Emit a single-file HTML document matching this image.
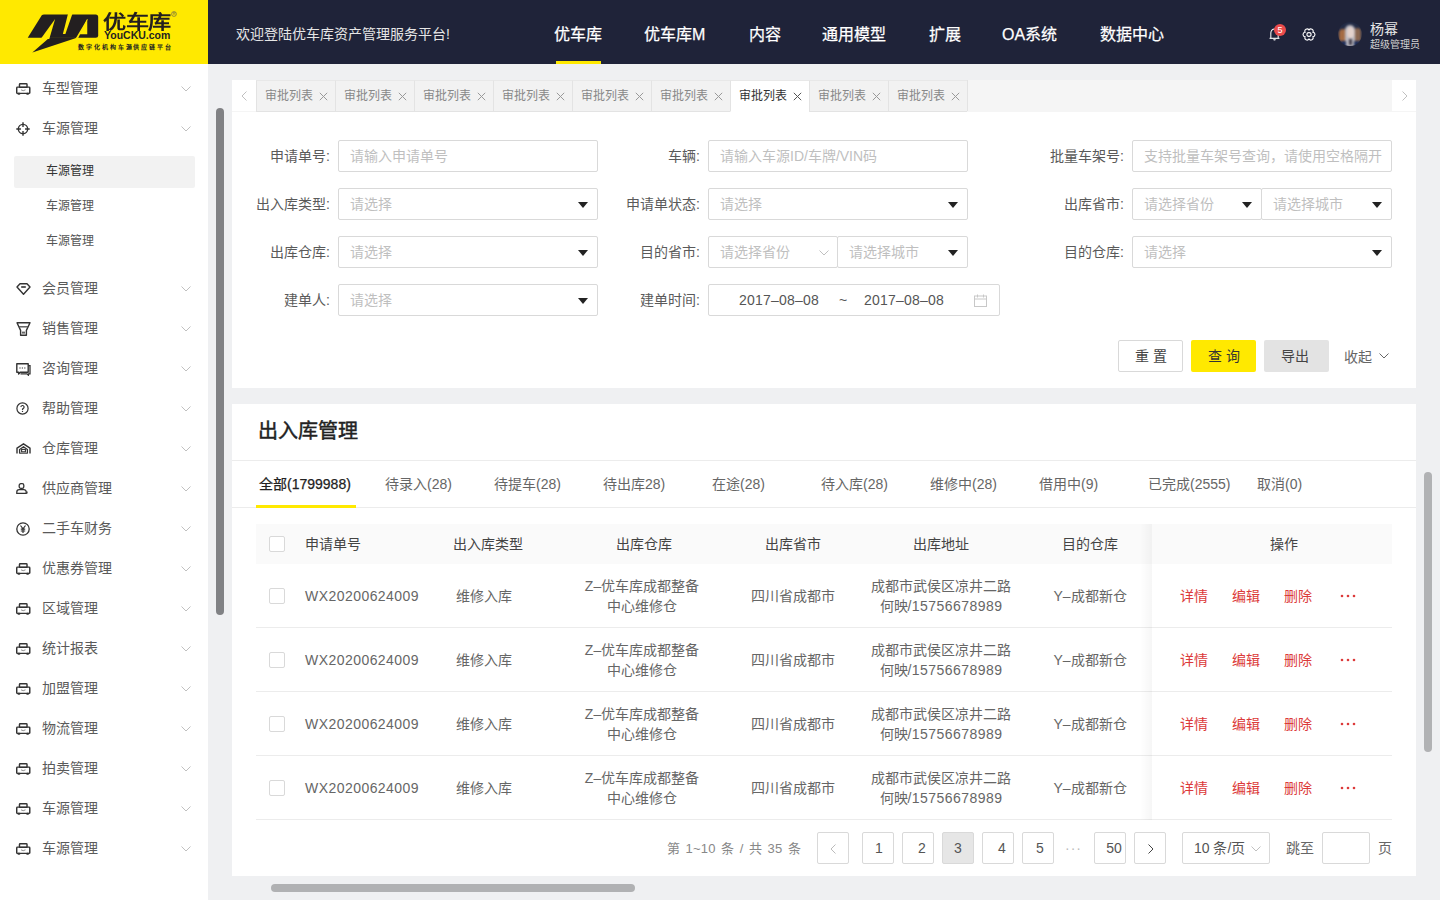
<!DOCTYPE html>
<html lang="zh-CN"><head><meta charset="utf-8">
<style>
*{margin:0;padding:0;box-sizing:border-box}
html,body{width:1440px;height:900px;overflow:hidden}
body{font-family:"Liberation Sans",sans-serif;background:#eff0f2;position:relative;color:#333}
.abs{position:absolute}
.t{position:absolute;white-space:nowrap;line-height:1}
/* header */
#hdr{position:absolute;left:0;top:0;width:1440px;height:64px;background:#1f2339}
#logo{position:absolute;left:0;top:0;width:208px;height:64px;background:#ffe900}
.nav{position:absolute;top:25px;font-size:16px;color:#fff;line-height:20px;white-space:nowrap;-webkit-text-stroke:0.25px #fff}
/* sidebar */
#side{position:absolute;left:0;top:64px;width:208px;height:836px;background:#fff}
.mi{position:absolute;left:42px;font-size:14px;color:#5a5a5a;line-height:20px;white-space:nowrap}
.chev{position:absolute;left:182px;width:10px;height:6px}
.ico{position:absolute;left:16px;width:16px;height:16px}
.sub{position:absolute;left:46px;font-size:12px;color:#555;line-height:16px;white-space:nowrap}
/* cards */
.card{position:absolute;background:#fff}
.lbl{position:absolute;font-size:14px;color:#5a5a5a;line-height:20px;white-space:nowrap;text-align:right}
.inp{position:absolute;height:32px;border:1px solid #d9d9d9;border-radius:2px;background:#fff}
.ph{position:absolute;left:11px;top:5px;font-size:14px;line-height:20px;color:#bfbfbf;white-space:nowrap}
.tri{position:absolute;top:13px;width:0;height:0;border-left:5px solid transparent;border-right:5px solid transparent;border-top:6px solid #222}
.tab{position:absolute;top:80px;height:32px;width:79px;background:#f2f2f2;border-left:1px solid #e3e3e3;border-bottom:1px solid #e3e3e3;border-top:1px solid #e8e8e8}
.tab span{position:absolute;left:8px;top:8px;font-size:12px;line-height:14px;color:#888}
.tab i{position:absolute;left:63px;top:11px;width:9px;height:9px}
.th{position:absolute;top:536px;font-size:14px;color:#444;line-height:16px;white-space:nowrap}
.td{position:absolute;font-size:14px;color:#666;line-height:20px;white-space:nowrap;text-align:center}
.cb{position:absolute;left:269px;width:16px;height:16px;border:1px solid #d9d9d9;border-radius:2px;background:#fff}
.op{position:absolute;font-size:14px;color:#dc3a3a;line-height:20px;white-space:nowrap}
.pg{position:absolute;top:832px;width:32px;height:32px;border:1px solid #d9d9d9;border-radius:2px;font-size:14px;color:#555;text-align:center;line-height:30px;background:#fff}
.st{position:absolute;top:475px;font-size:14px;color:#666;line-height:18px;white-space:nowrap}
</style></head>
<body>
<div id="hdr">
  <div id="logo">
<svg class="abs" style="left:24px;top:10px" width="80" height="46" viewBox="0 0 1440 828">
<path d="M70 495 L320 95 Q335 80 360 80 L1290 80 Q1335 80 1335 125 L1335 455 Q1335 500 1290 500 L70 500 Z" fill="#231f20"/>
<path d="M447 490 L940 490 L925 508 L150 765 L440 512 Z" fill="#231f20"/>
<path d="M300 520 L560 160 L455 520 Z" fill="#ffe900"/>
<path d="M795 60 L875 60 L745 430 L700 430 Z" fill="#ffe900"/>
<path d="M1000 435 L1138 160 L1138 435 Z" fill="#ffe900"/>
<path d="M1138 160 L1145 175 L975 505 L935 505 Z" fill="#ffe900"/>
</svg>
<div class="t" style="left:103px;top:13px;font-size:19px;font-weight:900;color:#231f20;transform:scaleX(1.22);transform-origin:0 0;letter-spacing:-0.5px;line-height:19px">优车库</div>
<div class="t" style="left:104px;top:31px;font-size:10.5px;font-weight:bold;color:#231f20;line-height:9px">YouCKU.com</div>
<div class="t" style="left:78px;top:44px;font-size:6px;font-weight:bold;color:#231f20;letter-spacing:1.92px;line-height:7px">数字化机构车源供应链平台</div>
<svg class="abs" style="left:171px;top:11px" width="6" height="6" viewBox="0 0 6 6"><circle cx="3" cy="3" r="2.4" fill="none" stroke="#555" stroke-width="0.6"/><text x="3" y="4.3" font-size="3.5" text-anchor="middle" fill="#555" font-family="Liberation Sans">R</text></svg>
</div>
  <div class="t" style="left:236px;top:26px;font-size:14px;color:#e6e6e6;line-height:16px">欢迎登陆优车库资产管理服务平台!</div>
  <div class="nav" style="left:554px">优车库</div>
  <div class="abs" style="left:556px;top:61px;width:45px;height:3px;background:#ffe900"></div>
  <div class="nav" style="left:644px">优车库M</div>
  <div class="nav" style="left:749px">内容</div>
  <div class="nav" style="left:822px">通用模型</div>
  <div class="nav" style="left:929px">扩展</div>
  <div class="nav" style="left:1002px">OA系统</div>
  <div class="nav" style="left:1100px">数据中心</div>

  <svg class="abs" style="left:1268.5px;top:27px" width="11" height="14" viewBox="0 0 12 15"><path d="M2 12V6.3A4 4.3 0 0 1 10 6.3V12" fill="none" stroke="#fff" stroke-width="1.1"/><path d="M0.6 12.2h10.8" stroke="#fff" stroke-width="1.2"/><path d="M4.6 13.2a1.4 1.4 0 0 0 2.8 0z" fill="#fff"/></svg>
  <div class="abs" style="left:1274px;top:24px;width:12px;height:12px;border-radius:6px;background:#ea4b4b;color:#fff;font-size:9px;line-height:12px;text-align:center">5</div>
  <svg class="abs" style="left:1301.5px;top:27.5px" width="14" height="13" viewBox="0 0 14 13"><path d="M10.92 4.24A2.27 2.27 0 0 1 10.92 8.76A2.27 2.27 0 0 1 7.00 11.02A2.27 2.27 0 0 1 3.08 8.76A2.27 2.27 0 0 1 3.08 4.24A2.27 2.27 0 0 1 7.00 1.98A2.27 2.27 0 0 1 10.92 4.24Z" fill="none" stroke="#fff" stroke-width="1.1"/><ellipse cx="7" cy="6.5" rx="2.1" ry="1.9" fill="none" stroke="#fff" stroke-width="1.1"/></svg>
  <div class="abs" style="left:1338px;top:22px;width:24px;height:24px;border-radius:12px;overflow:hidden;background:#222a44">
    <div class="abs" style="left:0px;top:0px;width:24px;height:24px;filter:blur(0.9px)">
    <div class="abs" style="left:1px;top:7px;width:8px;height:13px;border-radius:4px;background:#a66c44"></div>
    <div class="abs" style="left:16px;top:6px;width:7px;height:14px;border-radius:4px;background:#8a6650"></div>
    <div class="abs" style="left:7px;top:3px;width:10px;height:23px;border-radius:5px 5px 2px 2px;background:#bdbbc2"></div>
    <div class="abs" style="left:9px;top:5px;width:7px;height:11px;border-radius:3.5px;background:#e4d2cc"></div>
    <div class="abs" style="left:11px;top:17px;width:3px;height:6px;background:#3f3a48"></div>
    <div class="abs" style="left:3px;top:19px;width:5px;height:6px;background:#1d2c58"></div>
    <div class="abs" style="left:16px;top:19px;width:6px;height:6px;background:#1d2c58"></div>
    </div>
  </div>
  <div class="t" style="left:1370px;top:21px;font-size:14px;color:#e6e6e6;line-height:16px">杨幂</div>
  <div class="t" style="left:1370px;top:39px;font-size:10px;color:#d0d0d0;line-height:11px">超级管理员</div>
</div>

<div id="side">
<svg class="ico" style="top:18.5px;height:12px;width:14.5px" viewBox="0 0 15 13" preserveAspectRatio="none"><rect x="3.6" y="0.75" width="7.8" height="4" rx="0.8" fill="none" stroke="#333" stroke-width="1.5"/><rect x="0.75" y="4.5" width="13.5" height="6.8" rx="0.8" fill="none" stroke="#333" stroke-width="1.5"/><rect x="1.5" y="10.5" width="3" height="2.2" rx="1" fill="#333"/><rect x="10.5" y="10.5" width="3" height="2.2" rx="1" fill="#333"/><path d="M5.2 7.4 Q7.5 9.2 9.8 7.4" fill="none" stroke="#777" stroke-width="0.9"/></svg>
<div class="mi" style="top:14px">车型管理</div>
<svg class="chev" style="top:22px;left:181px" viewBox="0 0 10 6"><path d="M0.5 0.5L5 5 9.5 0.5" fill="none" stroke="#c0c0c0" stroke-width="1"/></svg>
<svg class="ico" style="top:58.0px;width:14px;height:14px" viewBox="0 0 15 15"><circle cx="7.5" cy="7.5" r="5" fill="none" stroke="#333" stroke-width="1.5"/><path d="M7.5 0.3v5M7.5 9.7v5M0.3 7.5h5M9.7 7.5h5" stroke="#333" stroke-width="1.5"/></svg>
<div class="mi" style="top:54px">车源管理</div>
<svg class="chev" style="top:62px;left:181px" viewBox="0 0 10 6"><path d="M0.5 0.5L5 5 9.5 0.5" fill="none" stroke="#c0c0c0" stroke-width="1"/></svg>
<svg class="ico" style="top:219px;width:15px;height:12px" viewBox="0 0 15 12"><path d="M4 0.8h7l3 3.2-6.5 7.2L1 4z" fill="none" stroke="#333" stroke-width="1.4" stroke-linejoin="round"/><path d="M5.2 4h4.6" stroke="#333" stroke-width="1.6"/></svg>
<div class="mi" style="top:214px">会员管理</div>
<svg class="chev" style="top:222px;left:181px" viewBox="0 0 10 6"><path d="M0.5 0.5L5 5 9.5 0.5" fill="none" stroke="#c0c0c0" stroke-width="1"/></svg>
<svg class="ico" style="top:258px;width:15px;height:14px" viewBox="0 0 15 14"><path d="M1 0.8h13l-3.6 7.6v4.8H4.6V8.4z" fill="none" stroke="#333" stroke-width="1.4" stroke-linejoin="round"/><path d="M3 4.8h9" stroke="#555" stroke-width="1.4"/><rect x="6" y="9.6" width="3" height="2" fill="#666"/></svg>
<div class="mi" style="top:254px">销售管理</div>
<svg class="chev" style="top:262px;left:181px" viewBox="0 0 10 6"><path d="M0.5 0.5L5 5 9.5 0.5" fill="none" stroke="#c0c0c0" stroke-width="1"/></svg>
<svg class="ico" style="top:299px;width:15px;height:13px" viewBox="0 0 15 13"><path d="M0.8 0.8h11.4v8.4H4.2l-1.6 1.8V9.2H0.8z" fill="none" stroke="#333" stroke-width="1.4" stroke-linejoin="round"/><path d="M12.2 2.6h1.8v8.2h-1.4l-0.2 1.4-1.4-1.4H4.5" fill="none" stroke="#333" stroke-width="1.3"/><path d="M3.4 5h1.2M5.8 5h1.2M8.2 5h1.2" stroke="#333" stroke-width="1.2"/></svg>
<div class="mi" style="top:294px">咨询管理</div>
<svg class="chev" style="top:302px;left:181px" viewBox="0 0 10 6"><path d="M0.5 0.5L5 5 9.5 0.5" fill="none" stroke="#c0c0c0" stroke-width="1"/></svg>
<svg class="ico" style="top:338px;width:13px;height:13px" viewBox="0 0 13 13"><circle cx="6.5" cy="6.5" r="5.6" fill="none" stroke="#333" stroke-width="1.2"/><path d="M4.9 5.1a1.6 1.6 0 1 1 2.2 1.5c-0.5 0.2-0.6 0.5-0.6 1v0.4" fill="none" stroke="#333" stroke-width="1.2"/><circle cx="6.5" cy="9.4" r="0.7" fill="#333"/></svg>
<div class="mi" style="top:334px">帮助管理</div>
<svg class="chev" style="top:342px;left:181px" viewBox="0 0 10 6"><path d="M0.5 0.5L5 5 9.5 0.5" fill="none" stroke="#c0c0c0" stroke-width="1"/></svg>
<svg class="ico" style="top:379px;width:15px;height:11px" viewBox="0 0 15 11"><path d="M1 10.5V5.2L7.5 0.9 14 5.2v5.3" fill="none" stroke="#333" stroke-width="1.4"/><path d="M3.6 10.5V6.5L7.5 3.8l3.9 2.7v4" fill="none" stroke="#333" stroke-width="1.3"/><rect x="5.6" y="6.4" width="3.8" height="2.4" fill="none" stroke="#333" stroke-width="1.1"/><path d="M3.6 10.2h7.8" stroke="#333" stroke-width="1"/></svg>
<div class="mi" style="top:374px">仓库管理</div>
<svg class="chev" style="top:382px;left:181px" viewBox="0 0 10 6"><path d="M0.5 0.5L5 5 9.5 0.5" fill="none" stroke="#c0c0c0" stroke-width="1"/></svg>
<svg class="ico" style="top:419px;width:12px;height:11px" viewBox="0 0 12 11"><rect x="3.2" y="0.7" width="4.6" height="4.6" rx="1.6" fill="none" stroke="#333" stroke-width="1.3"/><path d="M0.8 10.3V9a2.4 2.4 0 0 1 2.4-2.4h4.6A2.4 2.4 0 0 1 10.2 9v1.3z" fill="none" stroke="#333" stroke-width="1.3"/><path d="M11 8.5v2" stroke="#333" stroke-width="1.2"/></svg>
<div class="mi" style="top:414px">供应商管理</div>
<svg class="chev" style="top:422px;left:181px" viewBox="0 0 10 6"><path d="M0.5 0.5L5 5 9.5 0.5" fill="none" stroke="#c0c0c0" stroke-width="1"/></svg>
<svg class="ico" style="top:458px;width:14px;height:14px" viewBox="0 0 14 14"><circle cx="7" cy="7" r="6.2" fill="none" stroke="#333" stroke-width="1.3"/><path d="M4.5 3.5L7 6.8 9.5 3.5M7 6.8v4.2M4.8 7.2h4.4M4.8 9h4.4" fill="none" stroke="#333" stroke-width="1.2"/></svg>
<div class="mi" style="top:454px">二手车财务</div>
<svg class="chev" style="top:462px;left:181px" viewBox="0 0 10 6"><path d="M0.5 0.5L5 5 9.5 0.5" fill="none" stroke="#c0c0c0" stroke-width="1"/></svg>
<svg class="ico" style="top:498.5px;height:12px;width:14.5px" viewBox="0 0 15 13" preserveAspectRatio="none"><rect x="3.6" y="0.75" width="7.8" height="4" rx="0.8" fill="none" stroke="#333" stroke-width="1.5"/><rect x="0.75" y="4.5" width="13.5" height="6.8" rx="0.8" fill="none" stroke="#333" stroke-width="1.5"/><rect x="1.5" y="10.5" width="3" height="2.2" rx="1" fill="#333"/><rect x="10.5" y="10.5" width="3" height="2.2" rx="1" fill="#333"/><path d="M5.2 7.4 Q7.5 9.2 9.8 7.4" fill="none" stroke="#777" stroke-width="0.9"/></svg>
<div class="mi" style="top:494px">优惠券管理</div>
<svg class="chev" style="top:502px;left:181px" viewBox="0 0 10 6"><path d="M0.5 0.5L5 5 9.5 0.5" fill="none" stroke="#c0c0c0" stroke-width="1"/></svg>
<svg class="ico" style="top:538.5px;height:12px;width:14.5px" viewBox="0 0 15 13" preserveAspectRatio="none"><rect x="3.6" y="0.75" width="7.8" height="4" rx="0.8" fill="none" stroke="#333" stroke-width="1.5"/><rect x="0.75" y="4.5" width="13.5" height="6.8" rx="0.8" fill="none" stroke="#333" stroke-width="1.5"/><rect x="1.5" y="10.5" width="3" height="2.2" rx="1" fill="#333"/><rect x="10.5" y="10.5" width="3" height="2.2" rx="1" fill="#333"/><path d="M5.2 7.4 Q7.5 9.2 9.8 7.4" fill="none" stroke="#777" stroke-width="0.9"/></svg>
<div class="mi" style="top:534px">区域管理</div>
<svg class="chev" style="top:542px;left:181px" viewBox="0 0 10 6"><path d="M0.5 0.5L5 5 9.5 0.5" fill="none" stroke="#c0c0c0" stroke-width="1"/></svg>
<svg class="ico" style="top:578.5px;height:12px;width:14.5px" viewBox="0 0 15 13" preserveAspectRatio="none"><rect x="3.6" y="0.75" width="7.8" height="4" rx="0.8" fill="none" stroke="#333" stroke-width="1.5"/><rect x="0.75" y="4.5" width="13.5" height="6.8" rx="0.8" fill="none" stroke="#333" stroke-width="1.5"/><rect x="1.5" y="10.5" width="3" height="2.2" rx="1" fill="#333"/><rect x="10.5" y="10.5" width="3" height="2.2" rx="1" fill="#333"/><path d="M5.2 7.4 Q7.5 9.2 9.8 7.4" fill="none" stroke="#777" stroke-width="0.9"/></svg>
<div class="mi" style="top:574px">统计报表</div>
<svg class="chev" style="top:582px;left:181px" viewBox="0 0 10 6"><path d="M0.5 0.5L5 5 9.5 0.5" fill="none" stroke="#c0c0c0" stroke-width="1"/></svg>
<svg class="ico" style="top:618.5px;height:12px;width:14.5px" viewBox="0 0 15 13" preserveAspectRatio="none"><rect x="3.6" y="0.75" width="7.8" height="4" rx="0.8" fill="none" stroke="#333" stroke-width="1.5"/><rect x="0.75" y="4.5" width="13.5" height="6.8" rx="0.8" fill="none" stroke="#333" stroke-width="1.5"/><rect x="1.5" y="10.5" width="3" height="2.2" rx="1" fill="#333"/><rect x="10.5" y="10.5" width="3" height="2.2" rx="1" fill="#333"/><path d="M5.2 7.4 Q7.5 9.2 9.8 7.4" fill="none" stroke="#777" stroke-width="0.9"/></svg>
<div class="mi" style="top:614px">加盟管理</div>
<svg class="chev" style="top:622px;left:181px" viewBox="0 0 10 6"><path d="M0.5 0.5L5 5 9.5 0.5" fill="none" stroke="#c0c0c0" stroke-width="1"/></svg>
<svg class="ico" style="top:658.5px;height:12px;width:14.5px" viewBox="0 0 15 13" preserveAspectRatio="none"><rect x="3.6" y="0.75" width="7.8" height="4" rx="0.8" fill="none" stroke="#333" stroke-width="1.5"/><rect x="0.75" y="4.5" width="13.5" height="6.8" rx="0.8" fill="none" stroke="#333" stroke-width="1.5"/><rect x="1.5" y="10.5" width="3" height="2.2" rx="1" fill="#333"/><rect x="10.5" y="10.5" width="3" height="2.2" rx="1" fill="#333"/><path d="M5.2 7.4 Q7.5 9.2 9.8 7.4" fill="none" stroke="#777" stroke-width="0.9"/></svg>
<div class="mi" style="top:654px">物流管理</div>
<svg class="chev" style="top:662px;left:181px" viewBox="0 0 10 6"><path d="M0.5 0.5L5 5 9.5 0.5" fill="none" stroke="#c0c0c0" stroke-width="1"/></svg>
<svg class="ico" style="top:698.5px;height:12px;width:14.5px" viewBox="0 0 15 13" preserveAspectRatio="none"><rect x="3.6" y="0.75" width="7.8" height="4" rx="0.8" fill="none" stroke="#333" stroke-width="1.5"/><rect x="0.75" y="4.5" width="13.5" height="6.8" rx="0.8" fill="none" stroke="#333" stroke-width="1.5"/><rect x="1.5" y="10.5" width="3" height="2.2" rx="1" fill="#333"/><rect x="10.5" y="10.5" width="3" height="2.2" rx="1" fill="#333"/><path d="M5.2 7.4 Q7.5 9.2 9.8 7.4" fill="none" stroke="#777" stroke-width="0.9"/></svg>
<div class="mi" style="top:694px">拍卖管理</div>
<svg class="chev" style="top:702px;left:181px" viewBox="0 0 10 6"><path d="M0.5 0.5L5 5 9.5 0.5" fill="none" stroke="#c0c0c0" stroke-width="1"/></svg>
<svg class="ico" style="top:738.5px;height:12px;width:14.5px" viewBox="0 0 15 13" preserveAspectRatio="none"><rect x="3.6" y="0.75" width="7.8" height="4" rx="0.8" fill="none" stroke="#333" stroke-width="1.5"/><rect x="0.75" y="4.5" width="13.5" height="6.8" rx="0.8" fill="none" stroke="#333" stroke-width="1.5"/><rect x="1.5" y="10.5" width="3" height="2.2" rx="1" fill="#333"/><rect x="10.5" y="10.5" width="3" height="2.2" rx="1" fill="#333"/><path d="M5.2 7.4 Q7.5 9.2 9.8 7.4" fill="none" stroke="#777" stroke-width="0.9"/></svg>
<div class="mi" style="top:734px">车源管理</div>
<svg class="chev" style="top:742px;left:181px" viewBox="0 0 10 6"><path d="M0.5 0.5L5 5 9.5 0.5" fill="none" stroke="#c0c0c0" stroke-width="1"/></svg>
<svg class="ico" style="top:778.5px;height:12px;width:14.5px" viewBox="0 0 15 13" preserveAspectRatio="none"><rect x="3.6" y="0.75" width="7.8" height="4" rx="0.8" fill="none" stroke="#333" stroke-width="1.5"/><rect x="0.75" y="4.5" width="13.5" height="6.8" rx="0.8" fill="none" stroke="#333" stroke-width="1.5"/><rect x="1.5" y="10.5" width="3" height="2.2" rx="1" fill="#333"/><rect x="10.5" y="10.5" width="3" height="2.2" rx="1" fill="#333"/><path d="M5.2 7.4 Q7.5 9.2 9.8 7.4" fill="none" stroke="#777" stroke-width="0.9"/></svg>
<div class="mi" style="top:774px">车源管理</div>
<svg class="chev" style="top:782px;left:181px" viewBox="0 0 10 6"><path d="M0.5 0.5L5 5 9.5 0.5" fill="none" stroke="#c0c0c0" stroke-width="1"/></svg>
<div class="abs" style="left:14px;top:92px;width:181px;height:32px;background:#f2f2f2;border-radius:2px"></div>
<div class="sub" style="top:99px;color:#333">车源管理</div>
<div class="sub" style="top:134px;color:#555">车源管理</div>
<div class="sub" style="top:169px;color:#555">车源管理</div>
</div>
<div class="abs" style="left:216px;top:108px;width:8px;height:507px;background:#808184;border-radius:4px"></div>

<div class="card" style="left:232px;top:80px;width:1184px;height:32px;background:#f5f5f5"></div>
<div class="card" style="left:232px;top:80px;width:24px;height:31px;background:#fff"><svg class="abs" style="left:9px;top:11px" width="6" height="10" viewBox="0 0 6 10"><path d="M5.5 0.5L1 5l4.5 4.5" fill="none" stroke="#c0c0c0" stroke-width="1"/></svg></div>
<div class="card" style="left:1392px;top:80px;width:24px;height:31px;background:#fff"><svg class="abs" style="left:10px;top:11px" width="6" height="10" viewBox="0 0 6 10"><path d="M0.5 0.5L5 5 0.5 9.5" fill="none" stroke="#c0c0c0" stroke-width="1"/></svg></div>
<div class="tab" style="left:256px;background:#f2f2f2;"><span style="color:#888">审批列表</span><svg class="abs" style="left:62px;top:11px" width="9" height="9" viewBox="0 0 9 9"><path d="M0.8 0.8l7.4 7.4M8.2 0.8L0.8 8.2" stroke="#999" stroke-width="1"/></svg></div>
<div class="tab" style="left:335px;background:#f2f2f2;"><span style="color:#888">审批列表</span><svg class="abs" style="left:62px;top:11px" width="9" height="9" viewBox="0 0 9 9"><path d="M0.8 0.8l7.4 7.4M8.2 0.8L0.8 8.2" stroke="#999" stroke-width="1"/></svg></div>
<div class="tab" style="left:414px;background:#f2f2f2;"><span style="color:#888">审批列表</span><svg class="abs" style="left:62px;top:11px" width="9" height="9" viewBox="0 0 9 9"><path d="M0.8 0.8l7.4 7.4M8.2 0.8L0.8 8.2" stroke="#999" stroke-width="1"/></svg></div>
<div class="tab" style="left:493px;background:#f2f2f2;"><span style="color:#888">审批列表</span><svg class="abs" style="left:62px;top:11px" width="9" height="9" viewBox="0 0 9 9"><path d="M0.8 0.8l7.4 7.4M8.2 0.8L0.8 8.2" stroke="#999" stroke-width="1"/></svg></div>
<div class="tab" style="left:572px;background:#f2f2f2;"><span style="color:#888">审批列表</span><svg class="abs" style="left:62px;top:11px" width="9" height="9" viewBox="0 0 9 9"><path d="M0.8 0.8l7.4 7.4M8.2 0.8L0.8 8.2" stroke="#999" stroke-width="1"/></svg></div>
<div class="tab" style="left:651px;background:#f2f2f2;"><span style="color:#888">审批列表</span><svg class="abs" style="left:62px;top:11px" width="9" height="9" viewBox="0 0 9 9"><path d="M0.8 0.8l7.4 7.4M8.2 0.8L0.8 8.2" stroke="#999" stroke-width="1"/></svg></div>
<div class="tab" style="left:730px;background:#fff;border-bottom-color:#fff;"><span style="color:#333">审批列表</span><svg class="abs" style="left:62px;top:11px" width="9" height="9" viewBox="0 0 9 9"><path d="M0.8 0.8l7.4 7.4M8.2 0.8L0.8 8.2" stroke="#555" stroke-width="1"/></svg></div>
<div class="tab" style="left:809px;background:#f2f2f2;"><span style="color:#888">审批列表</span><svg class="abs" style="left:62px;top:11px" width="9" height="9" viewBox="0 0 9 9"><path d="M0.8 0.8l7.4 7.4M8.2 0.8L0.8 8.2" stroke="#999" stroke-width="1"/></svg></div>
<div class="tab" style="left:888px;background:#f2f2f2;"><span style="color:#888">审批列表</span><svg class="abs" style="left:62px;top:11px" width="9" height="9" viewBox="0 0 9 9"><path d="M0.8 0.8l7.4 7.4M8.2 0.8L0.8 8.2" stroke="#999" stroke-width="1"/></svg></div>
<div class="abs" style="left:967px;top:80px;width:1px;height:31px;background:#e3e3e3"></div>
<div class="card" style="left:232px;top:112px;width:1184px;height:276px"></div>
<div class="lbl" style="right:1110px;top:146px">申请单号:</div>
<div class="inp" style="left:338px;top:140px;width:260px"><div class="ph" style="color:#bfbfbf">请输入申请单号</div></div>
<div class="lbl" style="right:740px;top:146px">车辆:</div>
<div class="inp" style="left:708px;top:140px;width:260px"><div class="ph" style="color:#bfbfbf">请输入车源ID/车牌/VIN码</div></div>
<div class="lbl" style="right:316px;top:146px">批量车架号:</div>
<div class="inp" style="left:1132px;top:140px;width:260px"><div class="ph" style="color:#bfbfbf">支持批量车架号查询，请使用空格隔开</div></div>
<div class="lbl" style="right:1110px;top:194px">出入库类型:</div>
<div class="inp" style="left:338px;top:188px;width:260px"><div class="ph" style="color:#bfbfbf">请选择</div><div class="tri" style="left:239px"></div></div>
<div class="lbl" style="right:740px;top:194px">申请单状态:</div>
<div class="inp" style="left:708px;top:188px;width:260px"><div class="ph" style="color:#bfbfbf">请选择</div><div class="tri" style="left:239px"></div></div>
<div class="lbl" style="right:316px;top:194px">出库省市:</div>
<div class="inp" style="left:1132px;top:188px;width:130px"><div class="ph" style="color:#bfbfbf">请选择省份</div><div class="tri" style="left:109px"></div></div>
<div class="inp" style="left:1261px;top:188px;width:131px"><div class="ph" style="color:#bfbfbf">请选择城市</div><div class="tri" style="left:110px"></div></div>
<div class="lbl" style="right:1110px;top:242px">出库仓库:</div>
<div class="inp" style="left:338px;top:236px;width:260px"><div class="ph" style="color:#bfbfbf">请选择</div><div class="tri" style="left:239px"></div></div>
<div class="lbl" style="right:740px;top:242px">目的省市:</div>
<div class="inp" style="left:708px;top:236px;width:130px"><div class="ph">请选择省份</div><svg class="abs" style="left:110px;top:13px" width="10" height="6" viewBox="0 0 10 6"><path d="M0.5 0.5L5 5 9.5 0.5" fill="none" stroke="#c0c0c0" stroke-width="1"/></svg></div>
<div class="inp" style="left:837px;top:236px;width:131px"><div class="ph" style="color:#bfbfbf">请选择城市</div><div class="tri" style="left:110px"></div></div>
<div class="lbl" style="right:316px;top:242px">目的仓库:</div>
<div class="inp" style="left:1132px;top:236px;width:260px"><div class="ph" style="color:#bfbfbf">请选择</div><div class="tri" style="left:239px"></div></div>
<div class="lbl" style="right:1110px;top:290px">建单人:</div>
<div class="inp" style="left:338px;top:284px;width:260px"><div class="ph" style="color:#bfbfbf">请选择</div><div class="tri" style="left:239px"></div></div>
<div class="lbl" style="right:740px;top:290px">建单时间:</div>
<div class="inp" style="left:708px;top:284px;width:292px"><div class="ph" style="left:30px;color:#555;letter-spacing:0.2px">2017–08–08</div><div class="ph" style="left:130px;color:#555">~</div><div class="ph" style="left:155px;color:#555;letter-spacing:0.2px">2017–08–08</div><svg class="abs" style="left:265px;top:9px" width="13" height="13" viewBox="0 0 13 13"><rect x="0.5" y="2" width="12" height="10.5" fill="none" stroke="#c8c8c8" stroke-width="1"/><path d="M0.5 5h12M3.5 0.5v3M9.5 0.5v3" stroke="#c8c8c8" stroke-width="1"/></svg></div>
<div class="abs" style="left:1118px;top:340px;width:65px;height:32px;border:1px solid #d9d9d9;border-radius:2px;background:#fff;font-size:14px;color:#444;text-align:center;line-height:30px;letter-spacing:4px;padding-left:4px">重置</div>
<div class="abs" style="left:1191px;top:340px;width:65px;height:32px;border-radius:2px;background:#ffe900;font-size:14px;color:#333;text-align:center;line-height:32px;letter-spacing:4px;padding-left:4px">查询</div>
<div class="abs" style="left:1264px;top:340px;width:65px;height:32px;border-radius:2px;background:#e3e3e3;font-size:14px;color:#444;text-align:center;line-height:32px;padding-right:4px">导出</div>
<div class="t" style="left:1344px;top:349px;font-size:14px;color:#666;line-height:16px">收起</div>
<svg class="abs" style="left:1379px;top:353px" width="10" height="6" viewBox="0 0 10 6"><path d="M0.5 0.5L5 5 9.5 0.5" fill="none" stroke="#666" stroke-width="1"/></svg>
<div class="card" style="left:232px;top:404px;width:1184px;height:472px"></div>
<div class="t" style="left:258px;top:421px;font-size:20px;color:#222;line-height:20px;-webkit-text-stroke:0.45px #222">出入库管理</div>
<div class="abs" style="left:232px;top:460px;width:1184px;height:1px;background:#ececec"></div>
<div class="abs" style="left:232px;top:507px;width:1184px;height:1px;background:#ececec"></div>
<div class="abs" style="left:256px;top:505px;width:100px;height:3px;background:#ffe900"></div>
<div class="st" style="left:259px;color:#222;-webkit-text-stroke:0.25px #222">全部(1799988)</div>
<div class="st" style="left:385px;color:#666">待录入(28)</div>
<div class="st" style="left:494px;color:#666">待提车(28)</div>
<div class="st" style="left:603px;color:#666">待出库28)</div>
<div class="st" style="left:712px;color:#666">在途(28)</div>
<div class="st" style="left:821px;color:#666">待入库(28)</div>
<div class="st" style="left:930px;color:#666">维修中(28)</div>
<div class="st" style="left:1039px;color:#666">借用中(9)</div>
<div class="st" style="left:1148px;color:#666">已完成(2555)</div>
<div class="st" style="left:1257px;color:#666">取消(0)</div>
<div class="abs" style="left:256px;top:524px;width:1136px;height:40px;background:#fafafa"></div>
<div class="cb" style="top:536px"></div>
<div class="th" style="left:305px">申请单号</div>
<div class="th" style="left:387.5px;width:200px;text-align:center">出入库类型</div>
<div class="th" style="left:543.5px;width:200px;text-align:center">出库仓库</div>
<div class="th" style="left:692.5px;width:200px;text-align:center">出库省市</div>
<div class="th" style="left:840.5px;width:200px;text-align:center">出库地址</div>
<div class="th" style="left:989.5px;width:200px;text-align:center">目的仓库</div>
<div class="th" style="left:1183.5px;width:200px;text-align:center">操作</div>
<div class="abs" style="left:256px;top:627px;width:1136px;height:1px;background:#ececec"></div>
<div class="cb" style="top:588px"></div>
<div class="td" style="left:305px;top:586px" ><span style="letter-spacing:0.45px">WX20200624009</span></div>
<div class="td" style="left:456px;top:586px">维修入库</div>
<div class="td" style="left:542px;width:200px;top:576px">Z–优车库成都整备<br>中心维修仓</div>
<div class="td" style="left:693px;width:200px;top:586px">四川省成都市</div>
<div class="td" style="left:841px;width:200px;top:576px">成都市武侯区凉井二路<br>何映<span style="letter-spacing:0.45px">/15756678989</span></div>
<div class="td" style="left:990px;width:200px;top:586px">Y–成都新仓</div>
<div class="op" style="left:1180px;top:586px">详情</div>
<div class="op" style="left:1232px;top:586px">编辑</div>
<div class="op" style="left:1284px;top:586px">删除</div>
<svg class="abs" style="left:1340px;top:594px" width="16" height="4" viewBox="0 0 16 4"><circle cx="2" cy="2" r="1.3" fill="#dc3a3a"/><circle cx="8" cy="2" r="1.3" fill="#dc3a3a"/><circle cx="14" cy="2" r="1.3" fill="#dc3a3a"/></svg>
<div class="abs" style="left:256px;top:691px;width:1136px;height:1px;background:#ececec"></div>
<div class="cb" style="top:652px"></div>
<div class="td" style="left:305px;top:650px" ><span style="letter-spacing:0.45px">WX20200624009</span></div>
<div class="td" style="left:456px;top:650px">维修入库</div>
<div class="td" style="left:542px;width:200px;top:640px">Z–优车库成都整备<br>中心维修仓</div>
<div class="td" style="left:693px;width:200px;top:650px">四川省成都市</div>
<div class="td" style="left:841px;width:200px;top:640px">成都市武侯区凉井二路<br>何映<span style="letter-spacing:0.45px">/15756678989</span></div>
<div class="td" style="left:990px;width:200px;top:650px">Y–成都新仓</div>
<div class="op" style="left:1180px;top:650px">详情</div>
<div class="op" style="left:1232px;top:650px">编辑</div>
<div class="op" style="left:1284px;top:650px">删除</div>
<svg class="abs" style="left:1340px;top:658px" width="16" height="4" viewBox="0 0 16 4"><circle cx="2" cy="2" r="1.3" fill="#dc3a3a"/><circle cx="8" cy="2" r="1.3" fill="#dc3a3a"/><circle cx="14" cy="2" r="1.3" fill="#dc3a3a"/></svg>
<div class="abs" style="left:256px;top:755px;width:1136px;height:1px;background:#ececec"></div>
<div class="cb" style="top:716px"></div>
<div class="td" style="left:305px;top:714px" ><span style="letter-spacing:0.45px">WX20200624009</span></div>
<div class="td" style="left:456px;top:714px">维修入库</div>
<div class="td" style="left:542px;width:200px;top:704px">Z–优车库成都整备<br>中心维修仓</div>
<div class="td" style="left:693px;width:200px;top:714px">四川省成都市</div>
<div class="td" style="left:841px;width:200px;top:704px">成都市武侯区凉井二路<br>何映<span style="letter-spacing:0.45px">/15756678989</span></div>
<div class="td" style="left:990px;width:200px;top:714px">Y–成都新仓</div>
<div class="op" style="left:1180px;top:714px">详情</div>
<div class="op" style="left:1232px;top:714px">编辑</div>
<div class="op" style="left:1284px;top:714px">删除</div>
<svg class="abs" style="left:1340px;top:722px" width="16" height="4" viewBox="0 0 16 4"><circle cx="2" cy="2" r="1.3" fill="#dc3a3a"/><circle cx="8" cy="2" r="1.3" fill="#dc3a3a"/><circle cx="14" cy="2" r="1.3" fill="#dc3a3a"/></svg>
<div class="abs" style="left:256px;top:819px;width:1136px;height:1px;background:#ececec"></div>
<div class="cb" style="top:780px"></div>
<div class="td" style="left:305px;top:778px" ><span style="letter-spacing:0.45px">WX20200624009</span></div>
<div class="td" style="left:456px;top:778px">维修入库</div>
<div class="td" style="left:542px;width:200px;top:768px">Z–优车库成都整备<br>中心维修仓</div>
<div class="td" style="left:693px;width:200px;top:778px">四川省成都市</div>
<div class="td" style="left:841px;width:200px;top:768px">成都市武侯区凉井二路<br>何映<span style="letter-spacing:0.45px">/15756678989</span></div>
<div class="td" style="left:990px;width:200px;top:778px">Y–成都新仓</div>
<div class="op" style="left:1180px;top:778px">详情</div>
<div class="op" style="left:1232px;top:778px">编辑</div>
<div class="op" style="left:1284px;top:778px">删除</div>
<svg class="abs" style="left:1340px;top:786px" width="16" height="4" viewBox="0 0 16 4"><circle cx="2" cy="2" r="1.3" fill="#dc3a3a"/><circle cx="8" cy="2" r="1.3" fill="#dc3a3a"/><circle cx="14" cy="2" r="1.3" fill="#dc3a3a"/></svg>
<div class="abs" style="left:1140px;top:524px;width:12px;height:296px;background:linear-gradient(to right,rgba(0,0,0,0),rgba(0,0,0,0.035))"></div>
<div class="t" style="left:667px;top:841px;font-size:13px;color:#888;line-height:16px"><span style="letter-spacing:0.2px;word-spacing:1.6px">第 1~10 条 / 共 35 条</span></div>
<div class="pg" style="left:817px"><svg class="abs" style="left:12px;top:11px" width="6" height="10" viewBox="0 0 6 10"><path d="M5.5 0.5L1 5l4.5 4.5" fill="none" stroke="#bbb" stroke-width="1"/></svg></div>
<div class="pg" style="left:862px;padding-left:2px">1</div>
<div class="pg" style="left:902px;padding-left:8px">2</div>
<div class="pg" style="left:942px;background:#e6e6e6;">3</div>
<div class="pg" style="left:982px;padding-left:8px">4</div>
<div class="pg" style="left:1022px;padding-left:4px">5</div>
<div class="pg" style="left:1094px;padding-left:8px">50</div>
<div class="t" style="left:1065px;top:840px;font-size:14px;color:#bbb;line-height:16px;letter-spacing:1px">···</div>
<div class="pg" style="left:1134px"><svg class="abs" style="left:13px;top:11px" width="6" height="10" viewBox="0 0 6 10"><path d="M0.5 0.5L5 5 0.5 9.5" fill="none" stroke="#444" stroke-width="1"/></svg></div>
<div class="pg" style="left:1182px;width:88px;text-align:left;padding-left:11px">10 条/页<svg class="abs" style="left:68px;top:13px" width="10" height="6" viewBox="0 0 10 6"><path d="M0.5 0.5L5 5 9.5 0.5" fill="none" stroke="#c0c0c0" stroke-width="1"/></svg></div>
<div class="t" style="left:1286px;top:840px;font-size:14px;color:#666;line-height:16px">跳至</div>
<div class="pg" style="left:1322px;width:48px"></div>
<div class="t" style="left:1378px;top:840px;font-size:14px;color:#666;line-height:16px">页</div>
<div class="abs" style="left:1424px;top:472px;width:8px;height:280px;background:#b1b2b4;border-radius:4px"></div>
<div class="abs" style="left:271px;top:884px;width:364px;height:8px;background:#b0b1b3;border-radius:4px"></div>
</body></html>
